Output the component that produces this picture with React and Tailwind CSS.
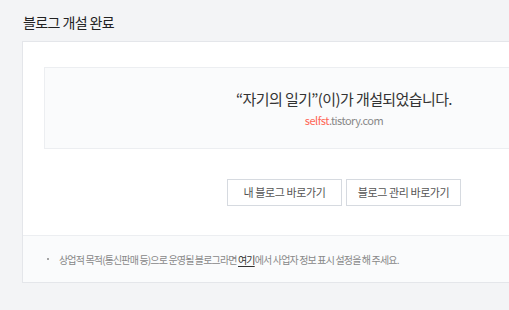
import React from "react";

const font = { fontFamily: '"Noto Sans CJK KR", "Noto Sans", sans-serif' };

const App = () => {
  return (
    <div
      className="w-[509px] h-[310px] overflow-hidden bg-[#f3f4f6]"
      style={font}
    >
      <div className="w-[700px] pl-[22px] pt-[12px]">
        <h1 className="text-[14px] leading-[20px] text-[#222] pl-[1px] tracking-[-0.6px]">
          블로그 개설 완료
        </h1>
        <div className="mt-[9px] w-[644px] bg-white border border-[#e4e6ea]">
          <div className="px-[21px] pt-[25px]">
            <div className="h-[82px] border border-[#eceef1] bg-[#fafbfc] flex flex-col items-center justify-center">
              <p className="text-[15px] leading-[23px] text-[#333] tracking-[-0.6px]">
                “자기의 일기”(이)가 개설되었습니다.
              </p>
              <p className="text-[11px] leading-[18px] mt-[1px] text-[#888] tracking-[-0.5px]">
                <span className="text-[#ff6655]">selfst</span>.tistory.com
              </p>
            </div>
            <div className="flex justify-center gap-[4px] mt-[30px]">
              <button className="w-[115px] h-[27px] border border-[#d6dae0] bg-white text-[11px] text-[#555] tracking-[-0.4px]">
                내 블로그 바로가기
              </button>
              <button className="w-[115px] h-[27px] border border-[#d6dae0] bg-white text-[11px] text-[#555] tracking-[-0.4px]">
                블로그 관리 바로가기
              </button>
            </div>
          </div>
          <div className="mt-[29px] h-[47px] border-t border-[#eceef1] bg-[#fafbfc] flex items-center pl-[24px]">
            <span className="w-[2px] h-[2px] bg-[#888] rounded-full mr-[10px]" />
            <p className="text-[10px] text-[#888] tracking-[-0.85px]">
              상업적 목적(통신판매 등)으로 운영될 블로그라면{" "}
              <span className="text-[#333] underline underline-offset-2">여기</span>
              에서 사업자 정보 표시 설정을 해 주세요.
            </p>
          </div>
        </div>
      </div>
    </div>
  );
};

export default App;
